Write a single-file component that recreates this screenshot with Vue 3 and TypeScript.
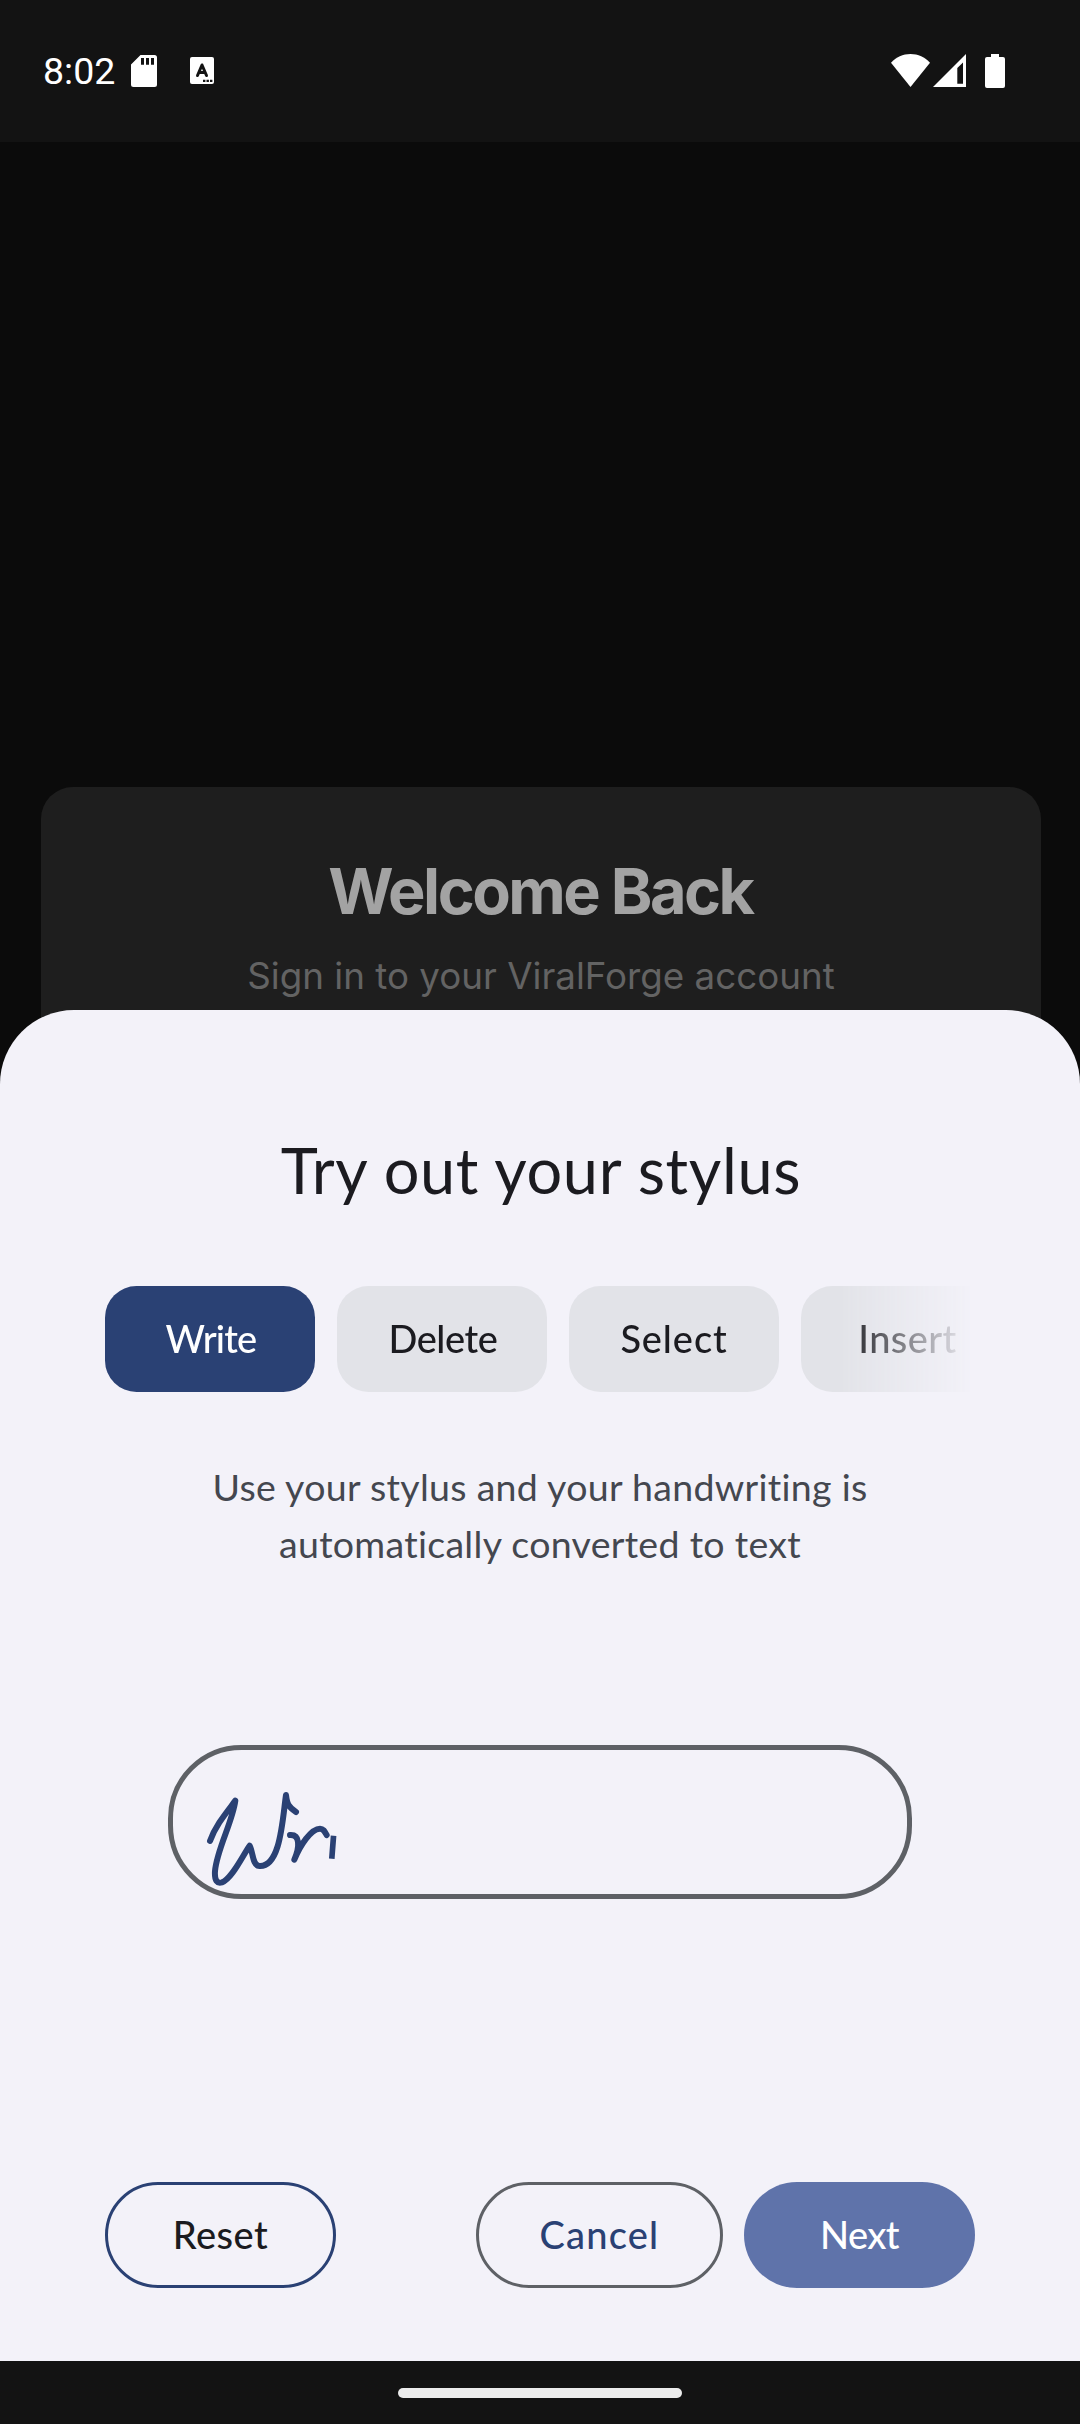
<script setup lang="ts">
interface Chip {
  label: string
  active?: boolean
}

const chips: Chip[] = [
  { label: 'Write', active: true },
  { label: 'Delete' },
  { label: 'Select' },
  { label: 'Insert' },
]
</script>

<template>
  <div class="screen">
    <header class="status">
      <span class="clock">8:02</span>
      <svg class="sd" width="26" height="32" viewBox="0 0 26 32">
        <path fill="#fff" fill-rule="evenodd" d="M9.500 0H23.500a2.500 2.500 0 0 1 2.500 2.500V29.500a2.500 2.500 0 0 1-2.500 2.500H2.500A2.500 2.500 0 0 1 0 29.500V9.500ZM10 3v6.700h3V3ZM15 3v6.700h3V3ZM20 3v6.700h3V3Z" />
      </svg>
      <svg class="lang" width="24" height="27" viewBox="0 0 24 27">
        <rect width="24" height="27" rx="2" fill="#fff" />
        <path d="M7.500 18.500L12 8l4.500 10.500M9 15.500h6" fill="none" stroke="#131313" stroke-width="3" stroke-linecap="round" stroke-linejoin="round" />
        <path d="M13 22.800h2.400v2.200H13zM16.500 22.800h2.400v2.200h-2.400zM20 22.800h2.400v2.200H20z" fill="#131313" />
      </svg>
      <span class="spacer"></span>
      <svg class="wifi" width="39" height="33" viewBox="0 0 39 33">
        <path fill="#fff" d="M0 8.800C5 3 12 0 19.500 0S34 3 39 8.800L19.500 33Z" />
      </svg>
      <svg class="signal" width="33" height="33" viewBox="0 0 33 33">
        <path fill="#fff" fill-rule="evenodd" d="M33 0V33H0ZM30 8.500L24.300 14V29.800H30Z" />
      </svg>
      <svg class="battery" width="20" height="34" viewBox="0 0 20 34">
        <path fill="#fff" d="M6 0h8v3h4a2 2 0 0 1 2 2v27a2 2 0 0 1-2 2H2a2 2 0 0 1-2-2V5a2 2 0 0 1 2-2h4Z" />
      </svg>
    </header>

    <main class="page">
      <section class="login">
        <h1>Welcome Back</h1>
        <p>Sign in to your ViralForge account</p>
      </section>
    </main>

    <section class="sheet">
      <h2>Try out your stylus</h2>
      <div class="chips">
        <button
          v-for="chip in chips"
          :key="chip.label"
          class="chip"
          :class="[{ active: chip.active }, chip.label.toLowerCase()]"
        >{{ chip.label }}</button>
      </div>
      <p class="hint">Use your stylus and your handwriting is<br>automatically converted to text</p>
      <div class="field">
        <svg width="200" height="144" viewBox="69 60 600 432">
          <g fill="none" stroke="#2a4174" stroke-width="18" stroke-linecap="round" stroke-linejoin="round">
            <path d="M180 333C196 288 226 252 256 212C247 278 201 357 195 423C193 453 202 461 216 457C246 446 277 378 299 347C309 364 307 409 329 408C391 410 397 273 408 195C411 222 416 231 438 246" />
            <path d="M420 315C450 313 450 349 433 389C450 347 483 296 510 296C520 296 524 304 530 315" />
          </g>
          <path d="M550 326L546 378" stroke="#2a4174" stroke-width="17" stroke-linecap="square" />
        </svg>
      </div>
      <footer class="actions">
        <button class="btn reset">Reset</button>
        <span class="spacer"></span>
        <button class="btn cancel">Cancel</button>
        <button class="btn next">Next</button>
      </footer>
    </section>

    <nav class="navbar"><span class="handle"></span></nav>
  </div>
</template>

<style>
body {
  margin: 0;
  background: #0b0b0b;
}
</style>

<style scoped>
.screen {
  display: flex;
  flex-direction: column;
  width: 1080px;
  height: 2424px;
  overflow: hidden;
  background: #0b0b0b;
}
.status {
  display: flex;
  flex: none;
  align-items: flex-start;
  box-sizing: border-box;
  height: 142px;
  padding: 54px 75px 0 43px;
  background: #131313;
}
.spacer {
  flex: 1;
}
.clock {
  width: 88px;
  font: 400 37.500px/34px Roboto, sans-serif;
  color: #fff;
}
.sd {
  margin-top: 1px;
}
.lang {
  margin: 3px 0 0 33px;
}
.signal {
  margin: 0 19px 0 3px;
}
.page {
  flex: none;
  box-sizing: border-box;
  height: 868px;
  padding: 645px 39px 0 41px;
}
.login {
  box-sizing: border-box;
  height: 400px;
  padding-top: 66px;
  border-radius: 32px;
  background: #1e1e1e;
  text-align: center;
  font-family: Inter, sans-serif;
}
.login h1 {
  margin: 0;
  padding-right: 1px;
  font-size: 63px;
  line-height: 76px;
  font-weight: 700;
  letter-spacing: -2.500px;
  color: #a3a3a3;
}
.login p {
  margin: 21px 0 0;
  font-size: 36.750px;
  line-height: 52px;
  color: #636363;
}
.sheet {
  display: flex;
  flex: none;
  flex-direction: column;
  box-sizing: border-box;
  height: 1351px;
  padding: 122px 105px 73px;
  border-radius: 74px 74px 0 0;
  background: #f3f2f9;
  font-family: Lato, sans-serif;
}
h2 {
  margin: 0;
  font-size: 63px;
  line-height: 76px;
  font-weight: 400;
  letter-spacing: 0.650px;
  text-indent: 2px;
  text-align: center;
  color: #1b1b20;
}
.chips {
  display: flex;
  gap: 22px;
  margin-top: 78px;
  overflow: hidden;
  -webkit-mask-image: linear-gradient(to left, transparent 3px, #000 134px);
  mask-image: linear-gradient(to left, transparent 3px, #000 134px);
}
.chip,
.btn {
  flex: none;
  box-sizing: border-box;
  height: 106px;
  margin: 0;
  padding: 0 0 3px;
  border: 0;
  font: 500 38px/46px Lato, sans-serif;
  white-space: nowrap;
}
.chip {
  width: 210px;
  border-radius: 31.500px;
  background: #e2e3e8;
  color: #1b1b20;
}
.chip.active {
  background: #2a4174;
  color: #fff;
}
.chip.write {
  padding-left: 2px;
  letter-spacing: -0.800px;
}
.chip.delete {
  padding-left: 2px;
  letter-spacing: -0.400px;
}
.chip.select {
  letter-spacing: 0.900px;
}
.chip.insert {
  width: 213px;
  letter-spacing: 0.400px;
}
.hint {
  margin: 66px 0 0;
  font-size: 37.500px;
  line-height: 57px;
  letter-spacing: 0.300px;
  text-align: center;
  color: #44474f;
}
.field {
  box-sizing: border-box;
  width: 744px;
  height: 154px;
  margin: 173px 63px 0;
  border: 5px solid #5e6166;
  border-radius: 73.500px;
}
.field svg {
  display: block;
}
.actions {
  display: flex;
  margin-top: auto;
}
.btn {
  border-radius: 53px;
  background: transparent;
}
.reset {
  width: 231px;
  border: 3px solid #2a4174;
  color: #1b1b20;
  letter-spacing: 0.500px;
}
.cancel {
  width: 247px;
  margin-right: 21px;
  border: 3px solid #5e6166;
  color: #2a4174;
  letter-spacing: 1.200px;
}
.next {
  width: 231px;
  background: #5f73aa;
  color: #fff;
  letter-spacing: -0.600px;
}
.navbar {
  display: flex;
  flex: 1;
  justify-content: center;
  padding-top: 27px;
  background: #131313;
}
.handle {
  width: 284px;
  height: 10px;
  border-radius: 5px;
  background: #ececec;
}
</style>
